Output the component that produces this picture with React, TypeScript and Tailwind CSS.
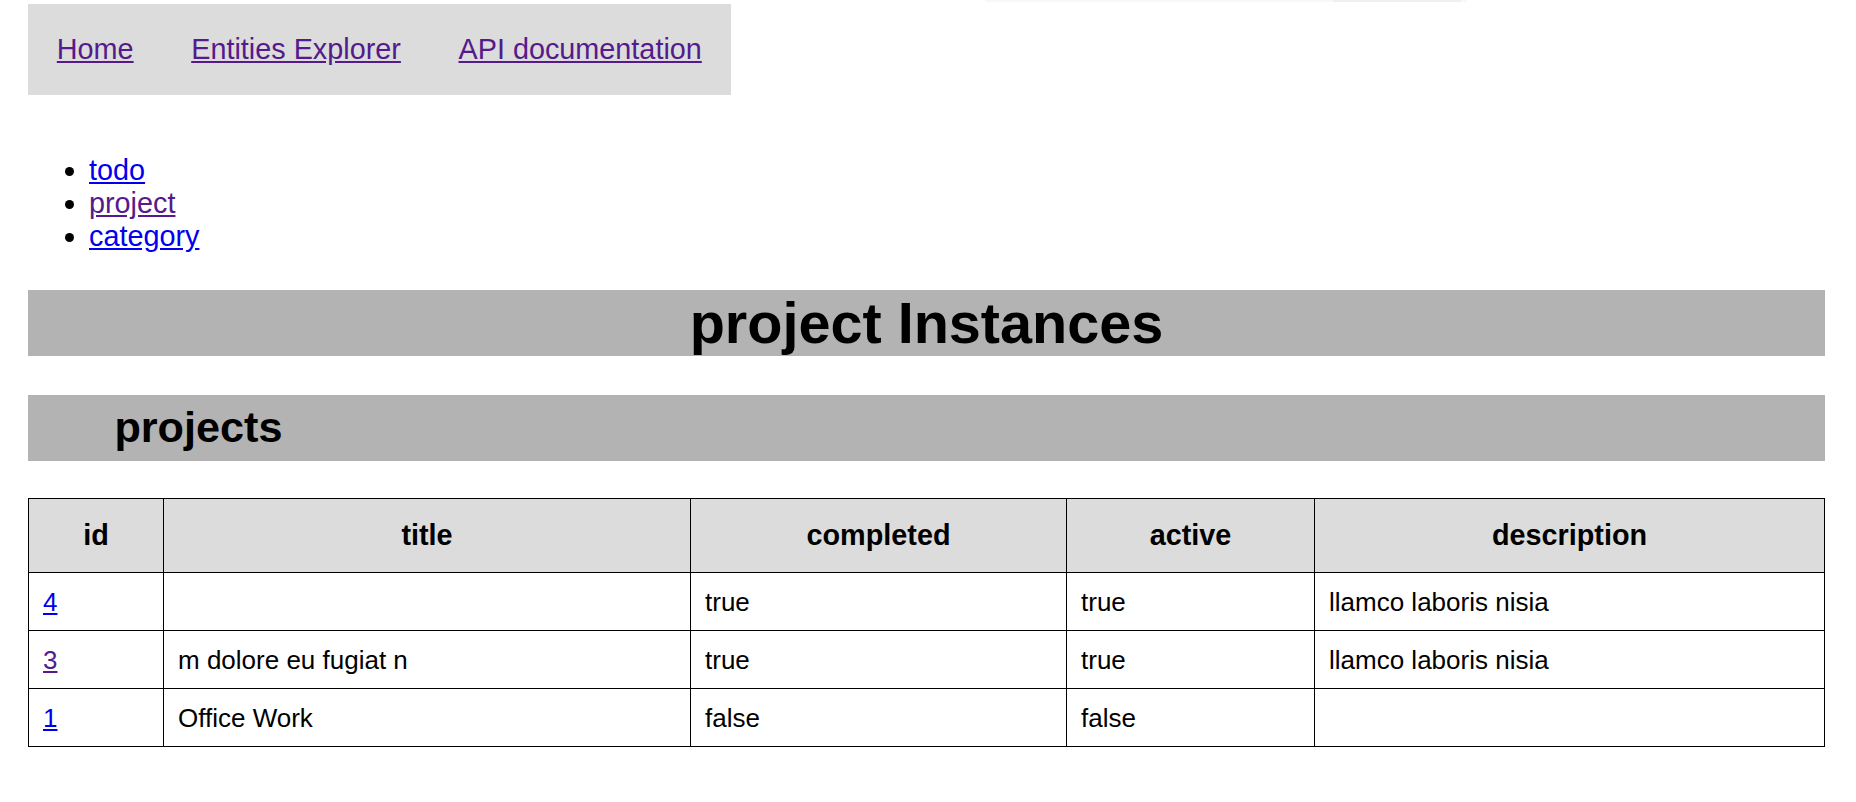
import React from "react";

const rows = [
  { id: "4", title: "", completed: "true", active: "true", description: "llamco laboris nisia", visited: false },
  { id: "3", title: "m dolore eu fugiat n", completed: "true", active: "true", description: "llamco laboris nisia", visited: true },
  { id: "1", title: "Office Work", completed: "false", active: "false", description: "", visited: false },
];

const entities = [
  { name: "todo", visited: false },
  { name: "project", visited: true },
  { name: "category", visited: false },
];

const App = () => {
  return (
    <div className="relative min-h-screen bg-white pl-[28px] pr-[31px] pt-[4px] font-['Liberation_Sans',Arial,sans-serif] text-black">
      {/* faint strip at the very top */}
      <div className="absolute left-[985px] top-0 h-[2px] w-[482px] bg-[#f8f8f8]">
        <div className="ml-[348px] h-[2px] w-[128px] bg-[#efefef]" />
      </div>

      <nav className="inline-flex gap-[57.6px] bg-[#dcdcdc] px-[28.8px] py-[29px] text-[28.8px] leading-[33px]">
        <a href="#" className="text-[#551a8b] underline">Home</a>
        <a href="#" className="text-[#551a8b] underline">Entities Explorer</a>
        <a href="#" className="text-[#551a8b] underline">API documentation</a>
      </nav>

      <ul className="mt-[59px] list-disc pl-[61px] text-[28.8px] leading-[33px]">
        {entities.map((e) => (
          <li key={e.name}>
            <a href="#" className={e.visited ? "text-[#551a8b] underline" : "text-[#0000ee] underline"}>
              {e.name}
            </a>
          </li>
        ))}
      </ul>

      <h1 className="mt-[37px] bg-[#b3b3b3] text-center text-[57.6px] font-bold leading-[66px]">
        project Instances
      </h1>

      <h2 className="mt-[39px] bg-[#b3b3b3] py-[8px] pl-[86.4px] text-[43.2px] font-bold leading-[49.7px]">
        projects
      </h2>

      <table className="mt-[37.6px] w-[1796px] table-fixed border-collapse border border-black">
        <colgroup>
          <col className="w-[135px]" />
          <col className="w-[527px]" />
          <col className="w-[376px]" />
          <col className="w-[248px]" />
          <col className="w-[510px]" />
        </colgroup>
        <thead>
          <tr className="bg-[#dcdcdc]">
            {["id", "title", "completed", "active", "description"].map((h) => (
              <th key={h} className="border border-black py-[20px] text-center text-[28.8px] font-bold leading-[33px]">
                {h}
              </th>
            ))}
          </tr>
        </thead>
        <tbody className="text-[26px] leading-[30px]">
          {rows.map((r) => (
            <tr key={r.id}>
              <td className="border border-black px-[14px] py-[13.5px]">
                <a href="#" className={r.visited ? "text-[#551a8b] underline" : "text-[#0000ee] underline"}>
                  {r.id}
                </a>
              </td>
              <td className="border border-black px-[14px] py-[13.5px]">{r.title}</td>
              <td className="border border-black px-[14px] py-[13.5px]">{r.completed}</td>
              <td className="border border-black px-[14px] py-[13.5px]">{r.active}</td>
              <td className="border border-black px-[14px] py-[13.5px]">{r.description}</td>
            </tr>
          ))}
        </tbody>
      </table>
    </div>
  );
};

export default App;
